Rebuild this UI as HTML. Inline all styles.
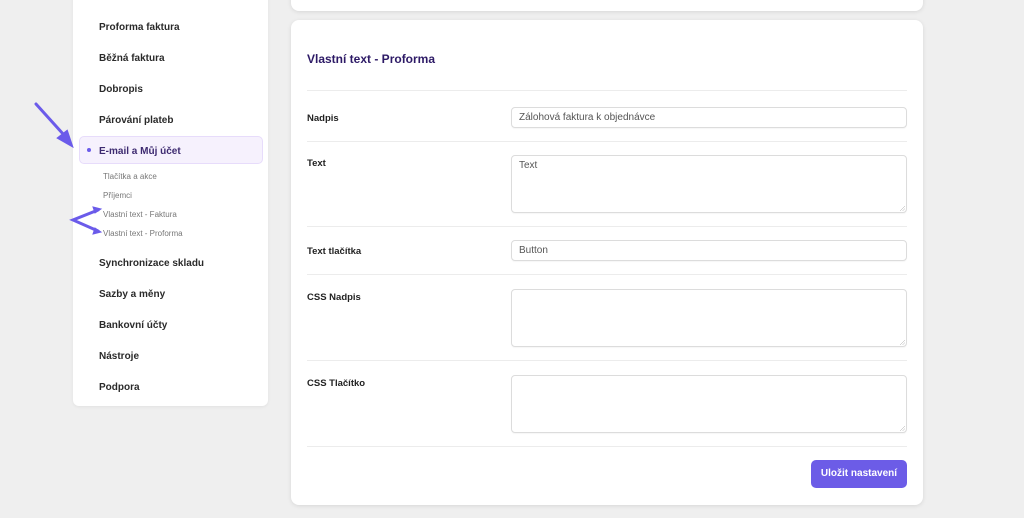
<!DOCTYPE html>
<html><head><meta charset="utf-8"><style>
*{box-sizing:border-box;margin:0;padding:0}
body{width:1024px;height:518px;background:#efefef;font-family:"Liberation Sans",sans-serif;position:relative;overflow:hidden;color:#222}
.side{position:absolute;left:73px;top:-20px;width:195px;height:426px;background:#fff;border-radius:0 0 6px 6px;box-shadow:0 1px 3px rgba(0,0,0,.06)}
.it{position:absolute;left:99px;font-size:10px;font-weight:bold;color:#2a2a2a}
.sub{position:absolute;left:103px;font-size:8px;color:#777}
.act{position:absolute;left:79px;top:136px;width:184px;height:28px;background:#f6f1fd;border:1px solid #e7dcfb;border-radius:5px}
.card{position:absolute;left:291px;width:632px;background:#fff;border-radius:8px;box-shadow:0 1px 4px rgba(0,0,0,.1)}
.hr{position:absolute;left:307px;width:600px;height:1px;background:#ececec}
.lab{position:absolute;left:307px;font-size:9.5px;font-weight:bold;color:#222}
.inp{position:absolute;left:511px;width:396px;border:1px solid #dcdcdc;border-radius:4px;background:#fff;font-size:10px;color:#555;padding:0 7px;box-shadow:0 1px 1px rgba(0,0,0,.04)}
.ta{padding-top:4px}
.ta:after{content:"";position:absolute;right:1px;bottom:1px;width:5px;height:5px;background:linear-gradient(135deg,transparent 45%,#aaa 50%,transparent 55%,transparent 70%,#aaa 75%,transparent 80%)}
</style></head><body>
<div class="side"></div>
<div class="it" style="top:22px">Proforma faktura</div>
<div class="it" style="top:53px">Běžná faktura</div>
<div class="it" style="top:84px">Dobropis</div>
<div class="it" style="top:115px">Párování plateb</div>
<div class="act"></div>
<div style="position:absolute;left:87px;top:148px;width:4px;height:4px;border-radius:50%;background:#6b5bea"></div>
<div class="it" style="top:146px;color:#3d2a70">E-mail a Můj účet</div>
<div class="sub" style="top:172px">Tlačítka a akce</div>
<div class="sub" style="top:191px">Příjemci</div>
<div class="sub" style="top:210px">Vlastní text - Faktura</div>
<div class="sub" style="top:229px">Vlastní text - Proforma</div>
<div class="it" style="top:258px">Synchronizace skladu</div>
<div class="it" style="top:289px">Sazby a měny</div>
<div class="it" style="top:320px">Bankovní účty</div>
<div class="it" style="top:351px">Nástroje</div>
<div class="it" style="top:382px">Podpora</div>
<svg style="position:absolute;left:0;top:0" width="120" height="250">
<g stroke="#6b5bea" stroke-width="3" fill="#6b5bea" stroke-linecap="round">
<line x1="36" y1="104" x2="64" y2="135"/>
<polygon points="72,146 58,138 67,131" stroke-width="2"/>
<polyline points="98,210 73,220 98,231" fill="none"/>
<polygon points="101,209 93,207 95,213" stroke-width="1"/>
<polygon points="101,232 93,234 95,228" stroke-width="1"/>
</g></svg>
<div class="card" style="top:-10px;height:21px"></div>
<div class="card" style="top:20px;height:485px"></div>
<div style="position:absolute;left:307px;top:52px;font-size:12px;font-weight:bold;color:#2d1a66">Vlastní text - Proforma</div>
<div class="hr" style="top:90px"></div>
<div class="lab" style="top:113px">Nadpis</div>
<div class="inp" style="top:107px;height:21px;line-height:19px">Zálohová faktura k objednávce</div>
<div class="hr" style="top:141px"></div>
<div class="lab" style="top:158px">Text</div>
<div class="inp ta" style="top:155px;height:58px">Text</div>
<div class="hr" style="top:226px"></div>
<div class="lab" style="top:246px">Text tlačítka</div>
<div class="inp" style="top:240px;height:21px;line-height:19px">Button</div>
<div class="hr" style="top:274px"></div>
<div class="lab" style="top:292px">CSS Nadpis</div>
<div class="inp ta" style="top:289px;height:58px"></div>
<div class="hr" style="top:360px"></div>
<div class="lab" style="top:378px">CSS Tlačítko</div>
<div class="inp ta" style="top:375px;height:58px"></div>
<div class="hr" style="top:446px"></div>
<div style="position:absolute;left:811px;top:460px;width:96px;height:28px;background:#6c5ce7;border-radius:5px;color:#fff;font-size:10px;font-weight:bold;text-align:center;line-height:28px">Uložit nastavení</div>
</body></html>
